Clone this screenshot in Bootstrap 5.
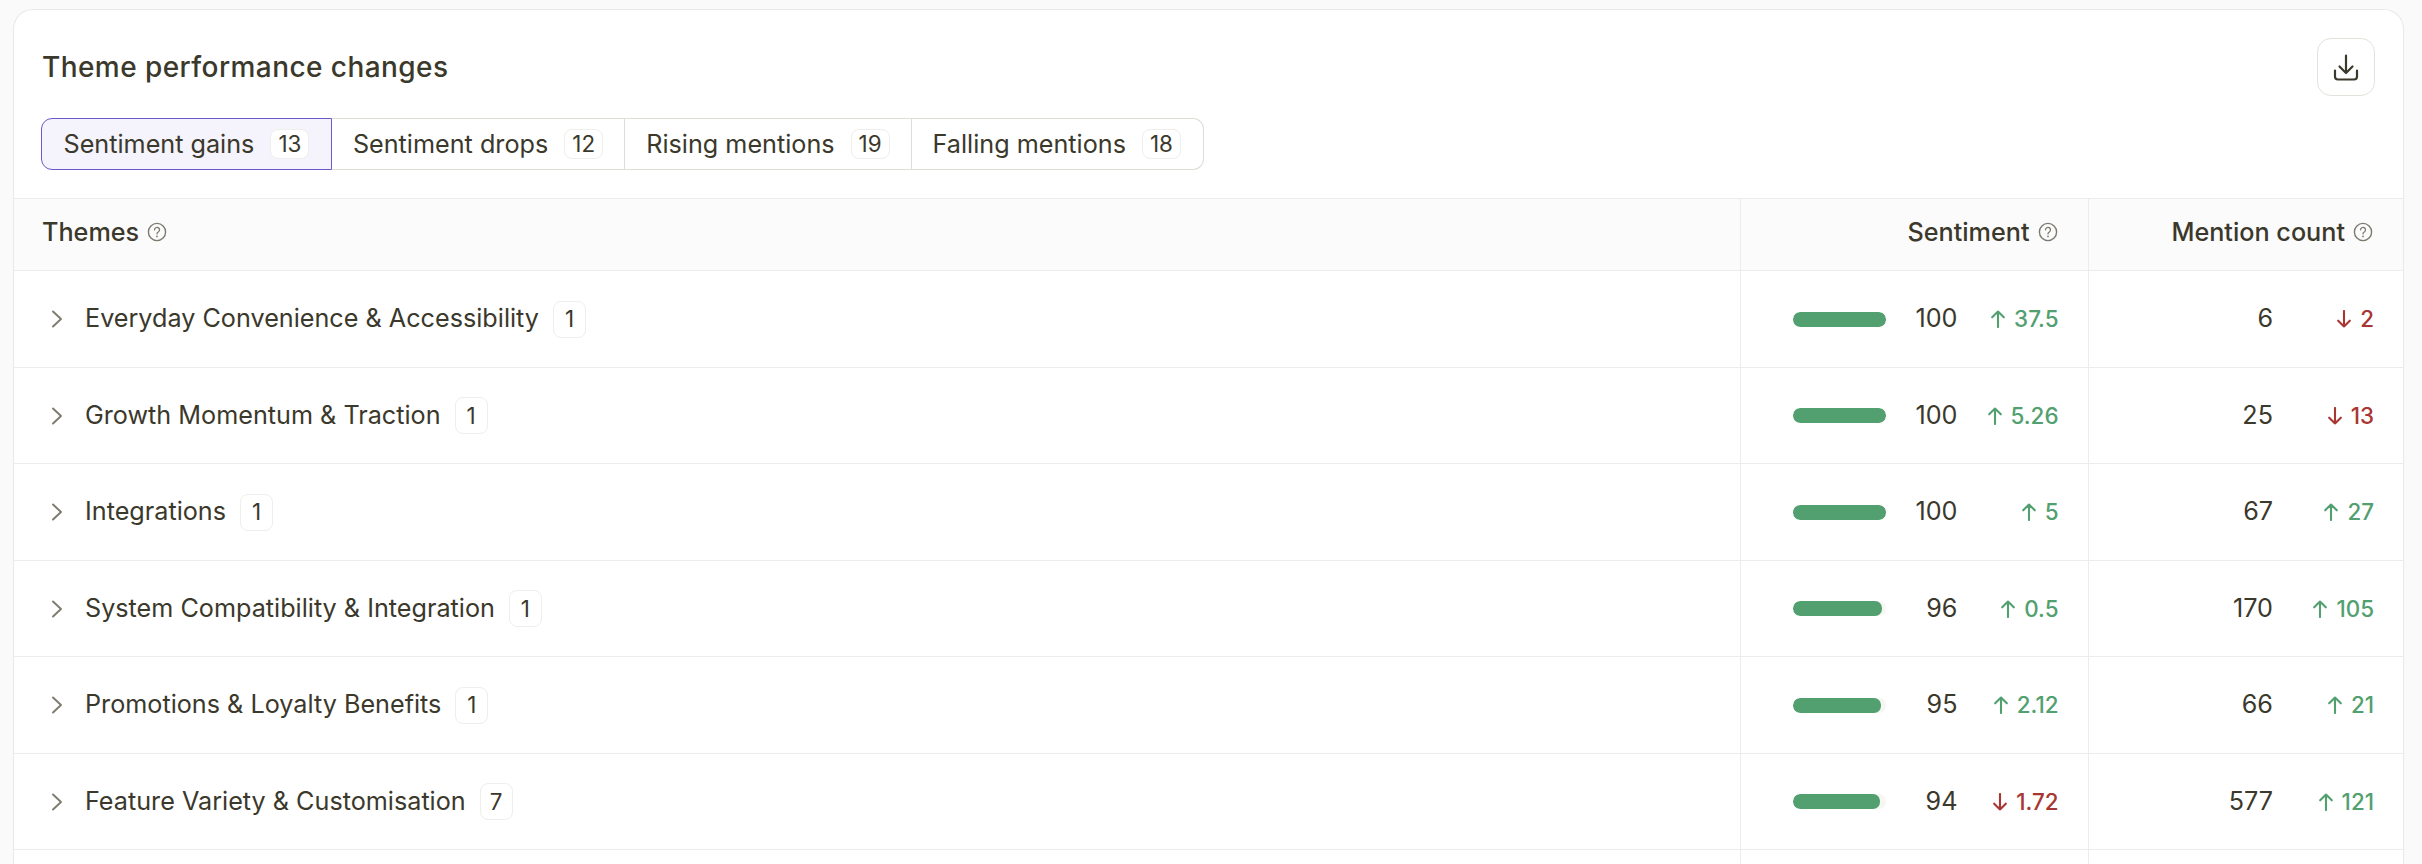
<!DOCTYPE html>
<html lang="en">
<head>
<meta charset="utf-8">
<title>Theme performance changes</title>
<link rel="stylesheet" href="https://cdn.jsdelivr.net/npm/bootstrap@5.3.0/dist/css/bootstrap.min.css">
<style>
html,body{height:864px;overflow:hidden}
body{background:#fafafa;font-family:Inter,"Liberation Sans",sans-serif;color:#3b382c;font-size:25.2px}
.page-wrap{padding:9px 18px 0 13px;height:864px;overflow:hidden}
.panel-card{background:#fff;border:1px solid #e9e9e6;border-bottom:0;border-radius:20px 20px 0 0;overflow:hidden;height:855px}
.panel-top{padding:28px 28px 28px 28px}
.panel-title{font-size:28px;font-weight:500;line-height:36px;margin:0;color:#3b382c;letter-spacing:.43px}
.dl-btn{width:58px;height:58px;border:1px solid #e4e2dc;border-radius:14px;background:#fff;padding:0;display:flex;align-items:center;justify-content:center}
.tab-strip{margin-top:22px;display:inline-flex;margin-left:-1px}
.tab-item{height:52px;border:1px solid #dfddd6;border-left-width:0;background:#fff;display:flex;align-items:center;gap:16px;padding:1px 21px 0;font-size:25.2px;color:#3b382c}
.tab-item:first-child{border-left-width:1px;border-radius:11px 0 0 11px;background:#f5f3fc;border-color:#6a5acd;padding:1px 21.500px 0}
.tab-item:last-child{border-radius:0 11px 11px 0;padding-right:22px}
.count-pill{border:1px solid #efeeea;border-radius:8px;background:#fff;font-size:22.400px;height:30px;display:flex;align-items:center;justify-content:center}
.tab-item .count-pill{width:39px;margin-top:-1px}
.theme-table{table-layout:fixed;width:100%;margin:0}
.theme-table th,.theme-table td{border-color:#ececea;padding:0;vertical-align:middle;color:#3b382c}
.theme-table th{background:#fbfbfb;height:72px;font-weight:500;font-size:25.2px;border-top-width:1px}
.theme-table td{height:96.5px}
.theme-table tr.row-tail td{height:15px;border-bottom-width:0}
.col-sent{width:348px}.col-ment{width:315px}
.theme-table .divided{border-left:1px solid #ececea}
.head-cell{display:flex;align-items:center;gap:8px;padding:0 30px 4px 28px}
.head-end{justify-content:flex-end}
.row-name{display:flex;align-items:center;padding:1px 0 0 37px;font-size:25.2px}
.row-name svg{margin-right:22px}
.row-name .count-pill{margin-left:14px;width:33px;height:37px}
.metric{display:flex;align-items:center;padding:1px 29px 0 52px}
.bar-track{width:93px;height:15px;border-radius:7px;background:#f6f6f3;overflow:hidden;flex:none}
.bar-fill{display:block;height:100%;background:#52a070;border-radius:7px}
.metric-num{font-size:25.2px;margin-left:auto}
.metric-delta{width:101px;flex:none;display:flex;align-items:center;justify-content:flex-end;gap:9px;font-size:22.400px;font-weight:500}
.up{color:#52a070}.down{color:#a83632}
</style>
</head>
<body>
<svg width="0" height="0" class="d-none" aria-hidden="true">
<symbol id="i-help" viewBox="0 0 20 20"><circle cx="10" cy="10" r="8.600" fill="none" stroke="currentColor" stroke-width="1.400"/><path d="M7.500 7.900a2.500 2.500 0 1 1 3.800 2.100c-.9.500-1.300 1-1.300 1.900" fill="none" stroke="currentColor" stroke-width="1.300" stroke-linecap="round"/><circle cx="10" cy="14.400" r=".9" fill="currentColor"/></symbol>
<symbol id="i-chev" viewBox="0 0 12 18"><path d="M2 1.500 10 9l-8 7.500" fill="none" stroke="currentColor" stroke-width="1.900" stroke-linecap="round" stroke-linejoin="round"/></symbol>
<symbol id="i-up" viewBox="0 0 14 18"><path d="M7 17V1.500M1.200 7.300 7 1.500l5.800 5.800" fill="none" stroke="currentColor" stroke-width="2.100" stroke-linecap="round" stroke-linejoin="round"/></symbol>
<symbol id="i-down" viewBox="0 0 14 18"><path d="M7 1V16.500M1.200 10.700 7 16.500l5.800-5.800" fill="none" stroke="currentColor" stroke-width="2.100" stroke-linecap="round" stroke-linejoin="round"/></symbol>
</svg>
<div class="page-wrap">
<div class="panel-card">
  <div class="panel-top">
    <div class="d-flex justify-content-between align-items-center">
      <h1 class="panel-title">Theme performance changes</h1>
      <button class="dl-btn" type="button" aria-label="Download"><svg width="26" height="27" viewBox="0 0 26 27" fill="none" stroke="#3b382c" stroke-width="2.200" stroke-linecap="round" stroke-linejoin="round"><path d="M13 1.500v17M6.500 12.500l6.500 6.500 6.500-6.500"/><path d="M2 16.500v6a3 3 0 0 0 3 3h16a3 3 0 0 0 3-3v-6"/></svg></button>
    </div>
    <div class="tab-strip">
      <div class="tab-item">Sentiment gains <span class="count-pill">13</span></div>
      <div class="tab-item">Sentiment drops <span class="count-pill">12</span></div>
      <div class="tab-item">Rising mentions <span class="count-pill">19</span></div>
      <div class="tab-item">Falling mentions <span class="count-pill">18</span></div>
    </div>
  </div>
  <table class="table theme-table">
    <colgroup><col><col class="col-sent"><col class="col-ment"></colgroup>
    <thead><tr>
      <th><div class="head-cell">Themes <svg width="20" height="20" color="#7d7a6e"><use href="#i-help"/></svg></div></th>
      <th class="divided"><div class="head-cell head-end">Sentiment <svg width="20" height="20" color="#7d7a6e"><use href="#i-help"/></svg></div></th>
      <th class="divided"><div class="head-cell head-end">Mention count <svg width="20" height="20" color="#7d7a6e"><use href="#i-help"/></svg></div></th>
    </tr></thead>
    <tbody id="rows"></tbody>
  </table>
</div>
</div>
<script src="https://cdn.jsdelivr.net/npm/bootstrap@5.3.0/dist/js/bootstrap.bundle.min.js"></script>
<script>
const data=[
["Everyday Convenience & Accessibility",1,100,"up","37.5",6,"down","2"],
["Growth Momentum & Traction",1,100,"up","5.26",25,"down","13"],
["Integrations",1,100,"up","5",67,"up","27"],
["System Compatibility & Integration",1,96,"up","0.5",170,"up","105"],
["Promotions & Loyalty Benefits",1,95,"up","2.12",66,"up","21"],
["Feature Variety & Customisation",7,94,"down","1.72",577,"up","121"]];
const delta=(d,v)=>`<span class="metric-delta ${d}"><svg width="14" height="18"><use href="#i-${d}"/></svg>${v}</span>`;
let h=data.map(r=>`<tr>
<td><div class="row-name"><svg width="12" height="18" color="#7d7a6e"><use href="#i-chev"/></svg>${r[0].replace("&","&amp;")}<span class="count-pill">${r[1]}</span></div></td>
<td class="divided"><div class="metric"><span class="bar-track"><span class="bar-fill" style="width:${r[2]}%"></span></span><span class="metric-num">${r[2]}</span>${delta(r[3],r[4])}</div></td>
<td class="divided"><div class="metric"><span class="metric-num">${r[5]}</span>${delta(r[6],r[7])}</div></td>
</tr>`).join("");
h+=`<tr class="row-tail"><td></td><td class="divided"></td><td class="divided"></td></tr>`;
document.getElementById("rows").innerHTML=h;
</script>
</body>
</html>
